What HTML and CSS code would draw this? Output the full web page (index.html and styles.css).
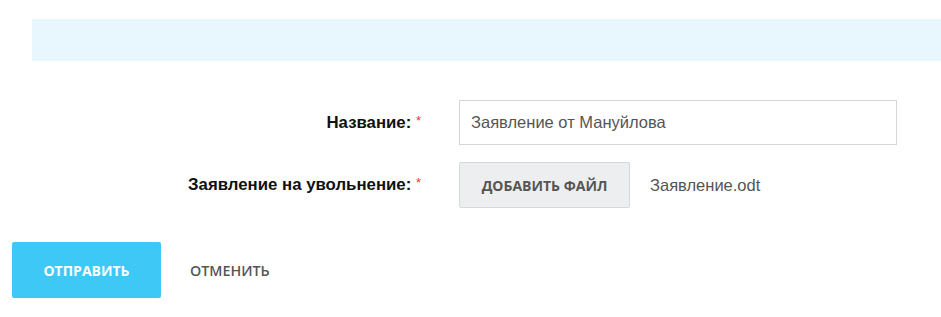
FILE: index.html
```html
<!DOCTYPE html>
<html lang="ru">
<head>
    <meta charset="UTF-8">
    <meta name="viewport" content="width=device-width, initial-scale=1.0">
    <title>Заявление на увольнение</title>
    <link rel="stylesheet" href="styles.css">
</head>
<body>
    <div class="page">
        <div class="notice"></div>

        <form class="request-form">
            <div class="form-row">
                <label class="form-label">Название: <span class="required">*</span></label>
                <div class="form-field">
                    <input class="text-input" type="text" value="Заявление от Мануйлова">
                </div>
            </div>

            <div class="form-row">
                <label class="form-label">Заявление на увольнение: <span class="required">*</span></label>
                <div class="form-field file-field">
                    <button type="button" class="file-button">Добавить файл</button>
                    <span class="file-name">Заявление.odt</span>
                </div>
            </div>

            <div class="form-actions">
                <button type="submit" class="submit-button">Отправить</button>
                <button type="button" class="cancel-button">Отменить</button>
            </div>
        </form>
    </div>
</body>
</html>
```

FILE: styles.css
```css
* {
    margin: 0;
    padding: 0;
    box-sizing: border-box;
}

body {
    font-family: "Liberation Sans", Arial, sans-serif;
    background: #fff;
    color: #333;
}

.page {
    padding: 19px 0 0 12px;
}

.notice {
    margin-left: 20px;
    height: 42px;
    background: #e7f7fd;
}

.request-form {
    margin-top: 39px;
}

.form-row {
    display: grid;
    grid-template-columns: 409px 438px;
    column-gap: 38px;
    align-items: center;
    margin-bottom: 17px;
}

.form-label {
    text-align: right;
    font-size: 16.8px;
    font-weight: bold;
    color: #111;
}

.required {
    color: #e53935;
    font-size: 13px;
    font-weight: normal;
    vertical-align: 3px;
}

.text-input {
    width: 438px;
    height: 45px;
    border: 1px solid #d3d6db;
    padding: 0 11px;
    font-family: "Liberation Sans", Arial, sans-serif;
    font-size: 16.5px;
    color: #555;
    outline: none;
}

.file-field {
    display: flex;
    align-items: center;
    gap: 20px;
}

.file-button {
    width: 171px;
    height: 46px;
    background: #eceeef;
    border: 1px solid #d5d8dc;
    border-radius: 2px;
    font-family: "Open Sans", sans-serif;
    font-size: 14px;
    font-weight: 700;
    text-transform: uppercase;
    color: #555;
}

.file-name {
    font-size: 16.5px;
    color: #555;
}

.form-actions {
    display: flex;
    align-items: center;
    gap: 18px;
    margin-top: 34px;
}

.submit-button {
    width: 149px;
    height: 56px;
    background: #3ec8f5;
    border: none;
    border-radius: 2px;
    font-family: "Open Sans", sans-serif;
    font-size: 14px;
    font-weight: 700;
    text-transform: uppercase;
    color: #fff;
}

.cancel-button {
    padding: 0 11px;
    background: none;
    border: none;
    font-family: "Open Sans", sans-serif;
    font-size: 14.3px;
    font-weight: 600;
    text-transform: uppercase;
    color: #555;
}
```
